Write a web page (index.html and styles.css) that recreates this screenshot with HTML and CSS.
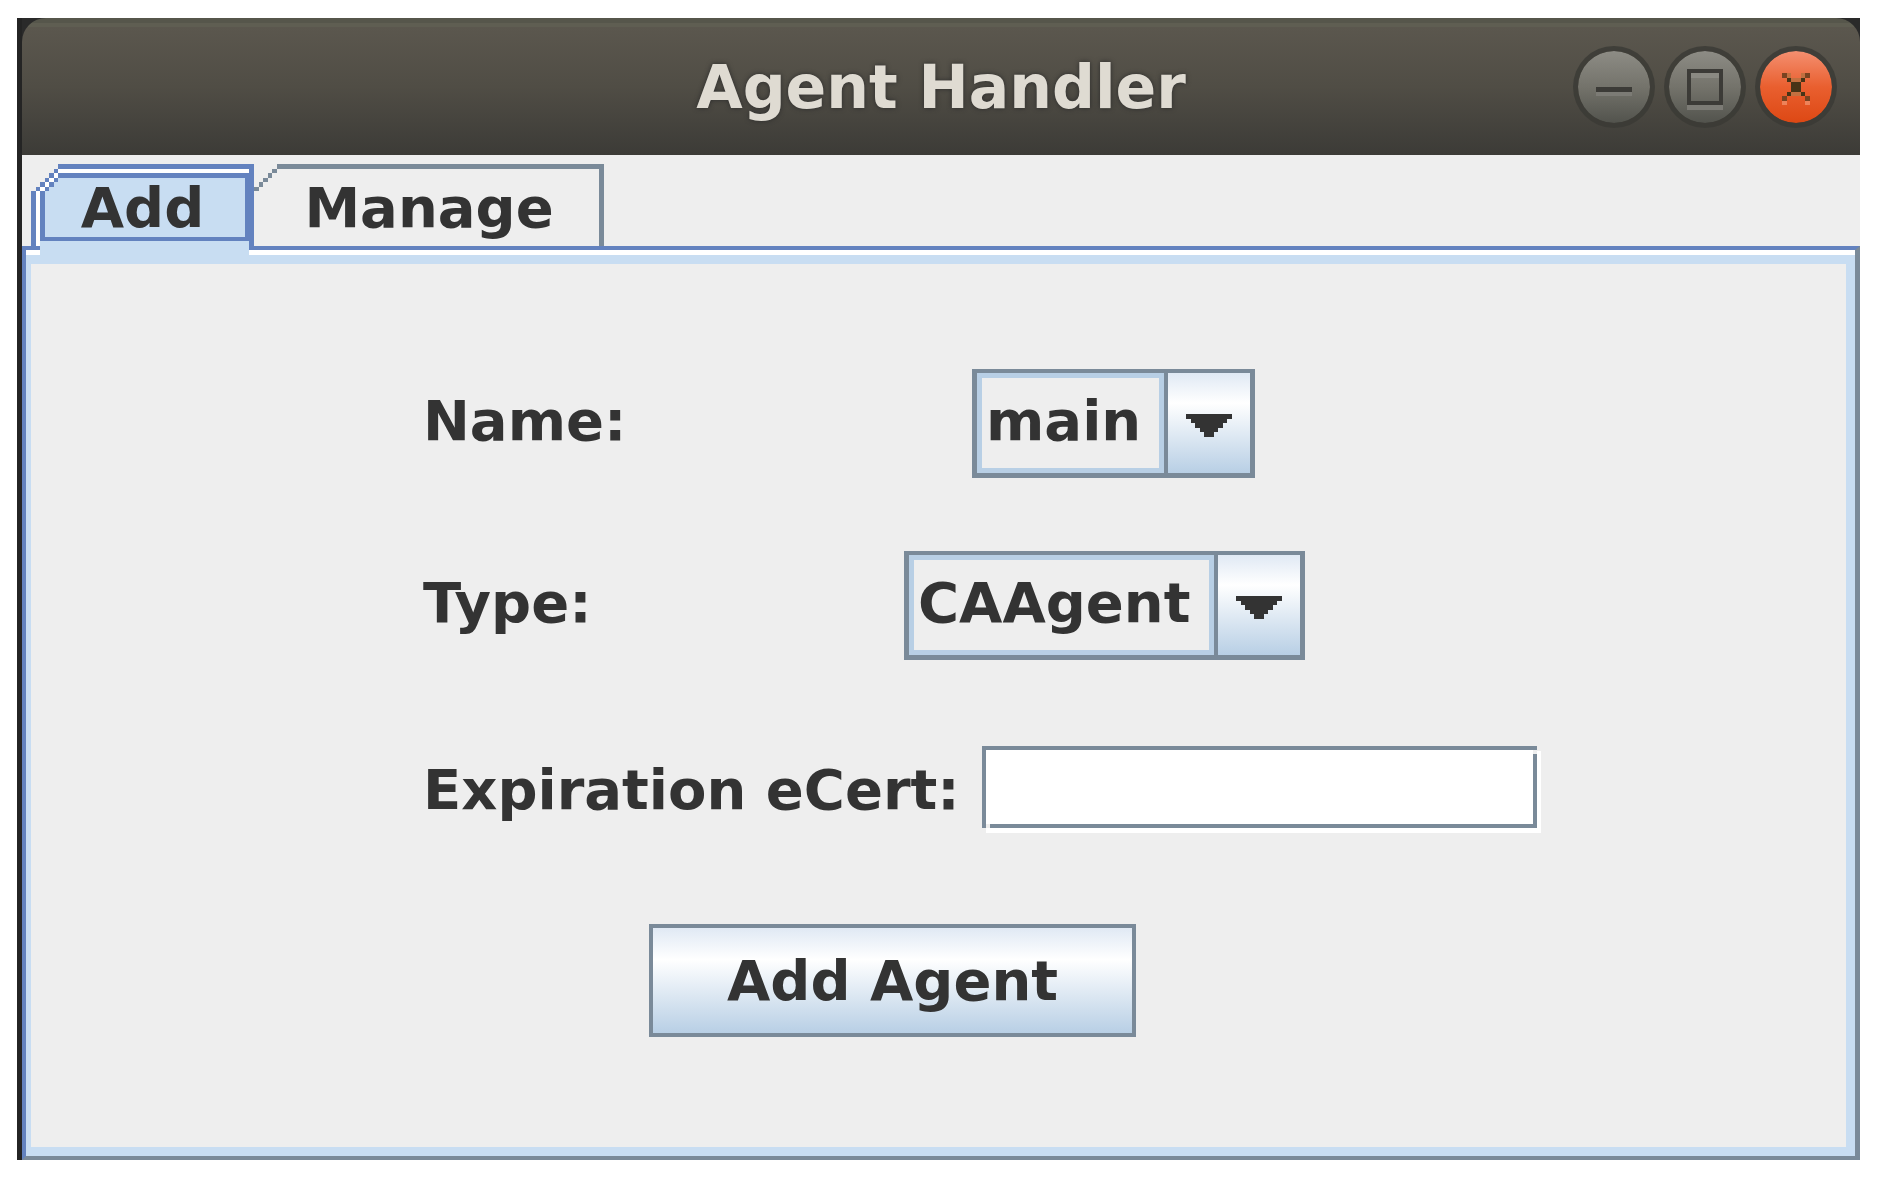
FILE: index.html
```html
<!DOCTYPE html>
<html lang="en">
<head>
<meta charset="utf-8">
<title>Agent Handler</title>
<link rel="stylesheet" href="styles.css">
</head>
<body>
<main class="window">
  <header class="titlebar">
    <h1 class="title">Agent Handler</h1>
    <div class="controls">
      <button class="control" type="button" aria-label="Minimize">
        <svg viewBox="0 0 18 18" shape-rendering="crispEdges"><path fill="#7c7b75" d="M5 10h8v1H5z"/><path fill="#3c3b37" d="M5 9h8v1H5z"/></svg>
      </button>
      <button class="control" type="button" aria-label="Maximize">
        <svg viewBox="0 0 18 18" shape-rendering="crispEdges"><path fill="#8a8982" d="M6 6h6v1H6z"/><path fill="#7c7b75" d="M5 13h8v1H5z"/><path fill="#3c3b37" fill-rule="evenodd" d="M5 5h8v8H5zM6 6v6h6V6z"/></svg>
      </button>
      <button class="control close" type="button" aria-label="Close">
        <svg viewBox="0 0 18 18" shape-rendering="crispEdges"><path fill="#ee8259" d="M6 12h1v1H6zM11 12h1v1h-1z"/><path fill="#c27040" d="M7 6h1v1H7zM10 6h1v1h-1zM8 7h2v1H8zM8 10h2v1H8z"/><path fill="#7a4320" d="M6 6h1v1H6zM11 6h1v1h-1zM6 11h1v1H6zM11 11h1v1h-1z"/><path fill="#463417" d="M7 7h1v1H7zM10 7h1v1h-1zM8 8h2v2H8zM7 10h1v1H7zM10 10h1v1h-1z"/></svg>
      </button>
    </div>
  </header>
  <nav class="tabs" role="tablist">
    <button class="tab tab-add" type="button" role="tab" aria-selected="true">
      <svg class="tab-frame" viewBox="0 0 49 20" preserveAspectRatio="none" shape-rendering="crispEdges">
        <path fill="#fff" d="M1 6h1V5h1V4h1V3h1V2h1V1h42v1H6v1H5v2H4v1H2v12H1z"/>
        <path fill="#c8ddf2" d="M3 6h1V5h1V4h1V3h41v13H3zM2 17h46v3H2z"/>
        <path fill="#6382bf" d="M0 6h1v12H0zM1 5h1v1H1zM2 4h1v1H2zM3 3h1v1H3zM4 2h1v1H4zM5 1h1v1H5zM6 0h43v18h-1v-1H2V6h1v10h44V3H6V2h42V1H6zM3 5h1v1H3zM4 4h1v1H4zM5 3h1v1H5z"/>
      </svg>
      <span class="tab-text">Add</span>
    </button>
    <button class="tab tab-manage" type="button" role="tab" aria-selected="false">
      <svg class="tab-frame" viewBox="0 0 77 20" preserveAspectRatio="none" shape-rendering="crispEdges">
        <path fill="#7a8a99" d="M0 5h1v1H0zM1 4h1v1H1zM2 3h1v1H2zM3 2h1v1H3zM4 1h1v1H4zM5 0h72v18h-1V1H5z"/>
      </svg>
      <span class="tab-text">Manage</span>
    </button>
  </nav>
  <section class="panel" role="tabpanel">
    <form class="form">
      <div class="row row-name">
        <label for="name">Name:</label>
        <div class="combo">
          <select id="name"><option>main</option></select>
          <span class="arrow"><svg viewBox="0 0 10 5" shape-rendering="crispEdges"><path fill="#333" d="M0 0h10v1H9v1H8v1H7v1H6v1H4V4H3V3H2V2H1V1H0z"/></svg></span>
        </div>
      </div>
      <div class="row row-type">
        <label for="type">Type:</label>
        <div class="combo combo-wide">
          <select id="type"><option>CAAgent</option></select>
          <span class="arrow"><svg viewBox="0 0 10 5" shape-rendering="crispEdges"><path fill="#333" d="M0 0h10v1H9v1H8v1H7v1H6v1H4V4H3V3H2V2H1V1H0z"/></svg></span>
        </div>
      </div>
      <div class="row row-expiration">
        <label for="expiration">Expiration eCert:</label>
        <input id="expiration" class="field" type="text">
      </div>
      <button class="submit" type="button">Add Agent</button>
    </form>
  </section>
</main>
</body>
</html>
```
FILE: styles.css
```css
* {
  box-sizing: border-box;
}

body {
  margin: 0;
  min-height: 100vh;
  padding: 18px 18px 19px 17px;
  display: flex;
  background: #fff;
  color: #333;
  font: bold 56px/66px "DejaVu Sans", sans-serif;
}

button,
select,
input {
  margin: 0;
  padding: 0;
  border: 0;
  border-radius: 0;
  color: inherit;
  font: inherit;
}

svg {
  display: block;
}

.window {
  flex: 1;
  display: flex;
  flex-direction: column;
  border-left: 5px solid #242424;
  background: linear-gradient(#2a2a2a 137px, #eee 137px);
}

.titlebar {
  height: 137px;
  padding: 1px 23px 0;
  display: grid;
  grid-template-columns: 1fr auto 1fr;
  align-items: center;
  border-radius: 24px 24px 0 0;
  background: linear-gradient(#56564b 5px, #5f5e52 5px, #5f5e52 9px, #5b574e 9px, #504d45 50%, #3c3b37);
}

.title {
  grid-column: 2;
  margin: 0;
  color: #dfdbd2;
  font-size: 60px;
  text-shadow: 0 0 5px #2b2b2b;
}

.controls {
  justify-self: end;
  display: flex;
  gap: 9px;
}

.control {
  width: 82px;
  height: 82px;
  border: 5px solid rgba(58, 57, 53, 0.8);
  border-radius: 50%;
  background: linear-gradient(#8d8c85, #74736b 50%, #52534d) padding-box;
}

.control svg {
  width: 82px;
  height: 82px;
  margin: -5px;
}

.close {
  background: linear-gradient(#f48f70, #e95f2f 50%, #dd4814) padding-box;
}

.tabs {
  padding: 9px 9px 0;
  display: flex;
  height: 91px;
}

.tab {
  position: relative;
  height: 82px;
  padding-top: 5px;
  background: none;
}

.tab-add {
  width: 223px;
}

.tab-manage {
  width: 350px;
}

.tab-frame {
  position: absolute;
  top: 0;
  left: 0;
  width: 100%;
  height: 91px;
}

.tab-text {
  position: relative;
}

.panel {
  flex: 1;
  border: solid #6382bf;
  border-width: 4px 5px 4px 4px;
  border-right-color: #7a8a99;
  border-bottom-color: #7a8a99;
  background: #fff;
  padding-top: 5px;
  display: flex;
}

.form {
  flex: 1;
  border: solid #c8ddf2;
  border-width: 9px 9px 9px 5px;
  background: #eee;
  padding-top: 105px;
  display: grid;
  grid-template-columns: 392fr 1118fr 305fr;
  align-content: start;
}

.row {
  grid-column: 2;
  display: flex;
  align-items: center;
}

.row label {
  white-space: nowrap;
}

.row-name label {
  width: 549px;
  padding-bottom: 5px;
}

.row-type label {
  width: 481px;
  padding-bottom: 5px;
}

.row-expiration label {
  width: 559px;
}

.row-type {
  margin-top: 73px;
}

.row-expiration {
  margin-top: 86px;
}

.combo {
  width: 283px;
  height: 109px;
  display: flex;
  border: solid #7a8a99;
  border-width: 4px 5px 5px;
}

.combo-wide {
  width: 401px;
}

.combo select {
  flex: 1;
  min-width: 0;
  appearance: none;
  border: 5px solid #b8cfe5;
  padding: 0 0 5px 4px;
  background: #eee;
}

.arrow {
  width: 86px;
  display: grid;
  place-items: center;
  border-left: 4px solid #7a8a99;
}

.arrow svg {
  width: 46px;
  height: 23px;
  margin-top: 5px;
}

.arrow,
.submit {
  background-image: linear-gradient(#e0e9f4, #fff 30%, #b8cfe5);
}

/* Etched border: the grey frame is broken at its top-right and bottom-left corners. */
.field {
  width: 555px;
  height: 82px;
  margin-bottom: 5px;
  padding: 4px 12px;
  background:
    linear-gradient(#eee, #eee) right 0 top 4px / 4px 4px no-repeat,
    linear-gradient(#eee, #eee) left 4px bottom 0 / 4px 4px no-repeat,
    linear-gradient(#7a8a99, #7a8a99) top / 100% 4px no-repeat,
    linear-gradient(#7a8a99, #7a8a99) bottom / 100% 4px no-repeat,
    linear-gradient(#7a8a99, #7a8a99) left / 4px 100% no-repeat,
    linear-gradient(#7a8a99, #7a8a99) right / 4px 100% no-repeat,
    #fff;
  box-shadow: 4px 5px #fff;
}

.submit {
  grid-column: 2;
  justify-self: start;
  width: 487px;
  height: 113px;
  margin: 91px 0 0 226px;
  border: 4px solid #7a8a99;
}
```
